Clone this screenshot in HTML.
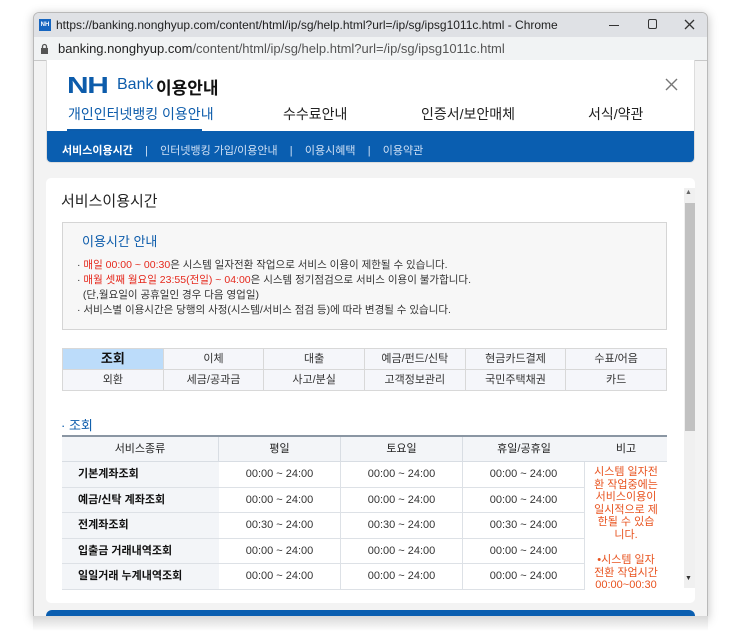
<!DOCTYPE html>
<html><head><meta charset="utf-8"><style>
*{margin:0;padding:0;box-sizing:border-box}
body{width:740px;height:631px;background:#fff;font-family:"Liberation Sans","Noto Sans CJK KR",sans-serif;position:relative;overflow:hidden}
.win{position:absolute;left:33px;top:12px;width:675px;height:606px;border:1px solid #b9b9b9;border-radius:6px 6px 0 0;background:#f3f3f3;overflow:hidden;box-shadow:0 2px 10px rgba(0,0,0,.25)}
.tb{height:24px;background:#dfe1e5;font-size:12px;color:#222;display:flex;align-items:center;padding-left:5px}
.ico{width:12px;height:12px;background:#1565c0;color:#fff;font-size:6px;font-weight:bold;display:inline-flex;align-items:center;justify-content:center;margin-right:5px}
.ab{height:24px;background:#f1f3f4;border-bottom:1px solid #c8c8c8;font-size:13px;color:#555;display:flex;align-items:center;padding-left:6px}
.ab b{color:#222;font-weight:normal}
.abs{position:absolute}
.c{width:122px;text-align:center;border-right:1px solid #dde1e6}
.n{width:157px;background:#f3f5f8;padding-left:16px;color:#111;font-weight:bold}
.r{display:flex;height:25.5px;line-height:25px;border-bottom:1px solid #dde1e6}
</style></head><body>
<div class="win">
 <div class="tb"><span class="ico">NH</span>https://banking.nonghyup.com/content/html/ip/sg/help.html?url=/ip/sg/ipsg1011c.html - Chrome</div>
 <div class="abs" style="left:575px;top:12px;width:10px;height:1.3px;background:#333"></div>
 <div class="abs" style="left:614px;top:6px;width:9px;height:10px;border:1.3px solid #333;border-radius:2px"></div>
 <svg class="abs" style="left:650px;top:6px" width="11" height="11"><path d="M1 1L10 10M10 1L1 10" stroke="#333" stroke-width="1.3"/></svg>
 <div class="ab"><svg width="9" height="11" style="margin-right:9px"><rect x="1" y="5" width="7" height="6" fill="#555"/><path d="M2.5 5V3.5a2 2 0 0 1 4 0V5" stroke="#555" stroke-width="1.3" fill="none"/></svg><b>banking.nonghyup.com</b>/content/html/ip/sg/help.html?url=/ip/sg/ipsg1011c.html</div>
</div>
<div class="abs" style="left:46px;top:60px;width:649px;height:103px;background:#fff;border-radius:0 0 5px 5px;overflow:hidden;border:1px solid #ddd;border-top:none">
 <div class="abs" style="left:20px;top:12px;font-size:23px;font-weight:900;color:#0d5cab;transform:scaleX(1.3);transform-origin:left;letter-spacing:-1px">NH</div>
 <div class="abs" style="left:70px;top:16px;font-size:16px;color:#0d5cab">Bank</div>
 <div class="abs" style="left:109px;top:14px;font-size:17px;color:#111;font-weight:bold">이용안내</div>
 <svg class="abs" style="left:618px;top:18px" width="13" height="13"><path d="M1 1L12 12M12 1L1 12" stroke="#777" stroke-width="1.4"/></svg>
 <div class="abs" style="left:21px;top:44px;font-size:14px;color:#0d5cab">개인인터넷뱅킹 이용안내</div>
 <div class="abs" style="left:20px;top:69px;width:135px;height:2px;background:#0d5cab"></div>
 <div class="abs" style="left:236px;top:44px;font-size:14px;color:#222">수수료안내</div>
 <div class="abs" style="left:374px;top:44px;font-size:14px;color:#222">인증서/보안매체</div>
 <div class="abs" style="left:541px;top:44px;font-size:14px;color:#222">서식/약관</div>
 <div class="abs" style="left:0;top:71px;width:649px;height:32px;background:#0a5eb0;font-size:11px;color:#cfe0f5;padding:11px 0 0 15px;white-space:nowrap">
  <b style="color:#fff">서비스이용시간</b>&nbsp;&nbsp;&nbsp;&nbsp;|&nbsp;&nbsp;&nbsp;&nbsp;인터넷뱅킹 가입/이용안내&nbsp;&nbsp;&nbsp;&nbsp;|&nbsp;&nbsp;&nbsp;&nbsp;이용시혜택&nbsp;&nbsp;&nbsp;&nbsp;|&nbsp;&nbsp;&nbsp;&nbsp;이용약관</div>
</div>
<div class="abs" style="left:46px;top:178px;width:649px;height:425px;background:#fff;border-radius:5px;overflow:hidden">
 <div class="abs" style="left:15px;top:12px;font-size:15px;color:#222">서비스이용시간</div>
 <div class="abs" style="left:16px;top:44px;width:605px;height:108px;background:#f7f7f7;border:1px solid #d5d5d5;font-size:10.5px;color:#333;line-height:15px;padding:11px 0 0 14px">
  <div style="font-size:13px;color:#0d5cab;margin:0 0 9px 5px">이용시간 안내</div>
  <div>· <span style="color:#e5291d">매일 00:00 ~ 00:30</span>은 시스템 일자전환 작업으로 서비스 이용이 제한될 수 있습니다.</div>
  <div>· <span style="color:#e5291d">매월 셋째 월요일 23:55(전일) ~ 04:00</span>은 시스템 정기점검으로 서비스 이용이 불가합니다.</div>
  <div>&nbsp;&nbsp;(단,월요일이 공휴일인 경우 다음 영업일)</div>
  <div>· 서비스별 이용시간은 당행의 사정(시스템/서비스 점검 등)에 따라 변경될 수 있습니다.</div>
 </div>
 <div class="abs" style="left:16px;top:170px;width:605px;display:grid;grid-template-columns:repeat(6,1fr);gap:1px;background:#d8d8d8;border:1px solid #d8d8d8;font-size:11px;color:#333;text-align:center">
  <div style="background:#bcdcfa;height:20px;line-height:20px;font-size:13px;color:#111;font-weight:bold">조회</div><div style="background:#f5f6fa;line-height:20px">이체</div><div style="background:#f5f6fa;line-height:20px">대출</div><div style="background:#f5f6fa;line-height:20px">예금/펀드/신탁</div><div style="background:#f5f6fa;line-height:20px">현금카드결제</div><div style="background:#f5f6fa;line-height:20px">수표/어음</div>
  <div style="background:#f5f6fa;height:20px;line-height:20px">외환</div><div style="background:#f5f6fa;line-height:20px">세금/공과금</div><div style="background:#f5f6fa;line-height:20px">사고/분실</div><div style="background:#f5f6fa;line-height:20px">고객정보관리</div><div style="background:#f5f6fa;line-height:20px">국민주택채권</div><div style="background:#f5f6fa;line-height:20px">카드</div>
 </div>
 <div class="abs" style="left:15px;top:237px;font-size:13px;color:#0d5cab">· 조회</div>
 <div class="abs" style="left:16px;top:257px;width:605px;border-top:2px solid #8a96a3;font-size:11px;color:#333">
  <div style="display:flex;height:25px;background:#f3f5f8;border-bottom:1px solid #d8dde3;line-height:25px;text-align:center;color:#222">
   <div style="width:157px;border-right:1px solid #d8dde3">서비스종류</div><div style="width:122px;border-right:1px solid #d8dde3">평일</div><div style="width:122px;border-right:1px solid #d8dde3">토요일</div><div style="width:122px">휴일/공휴일</div><div style="width:82px">비고</div>
  </div>
  <div style="display:flex">
   <div style="width:523px">
    <div class="r"><div class="n">기본계좌조회</div><div class="c">00:00 ~ 24:00</div><div class="c">00:00 ~ 24:00</div><div class="c">00:00 ~ 24:00</div></div>
    <div class="r"><div class="n">예금/신탁 계좌조회</div><div class="c">00:00 ~ 24:00</div><div class="c">00:00 ~ 24:00</div><div class="c">00:00 ~ 24:00</div></div>
    <div class="r"><div class="n">전계좌조회</div><div class="c">00:30 ~ 24:00</div><div class="c">00:30 ~ 24:00</div><div class="c">00:30 ~ 24:00</div></div>
    <div class="r"><div class="n">입출금 거래내역조회</div><div class="c">00:00 ~ 24:00</div><div class="c">00:00 ~ 24:00</div><div class="c">00:00 ~ 24:00</div></div>
    <div class="r"><div class="n">일일거래 누계내역조회</div><div class="c">00:00 ~ 24:00</div><div class="c">00:00 ~ 24:00</div><div class="c">00:00 ~ 24:00</div></div>
   </div>
   <div style="width:82px;color:#e8531f;text-align:center;line-height:12.6px;padding:4px 8px 0;height:127px;overflow:hidden;word-break:break-all">시스템 일자전환 작업중에는 서비스이용이 일시적으로 제한될 수 있습니다.<br><br>•시스템 일자전환 작업시간 00:00~00:30</div>
  </div>
 </div>
 <div class="abs" style="left:638px;top:10px;width:11px;height:400px;background:#f0f0f0"></div>
 <div class="abs" style="left:639px;top:11px;font-size:7px;color:#666">▲</div>
 <div class="abs" style="left:639px;top:25px;width:10px;height:228px;background:#c1c1c1"></div>
 <div class="abs" style="left:639px;top:397px;font-size:7px;color:#333">▼</div>
</div>
<div class="abs" style="left:46px;top:610px;width:649px;height:10px;background:#0a5eb0;border-radius:6px 6px 0 0"></div>
<div class="abs" style="left:33px;top:616px;width:675px;height:15px;background:linear-gradient(#d8d8d8,#fff)"></div>
</body></html>
